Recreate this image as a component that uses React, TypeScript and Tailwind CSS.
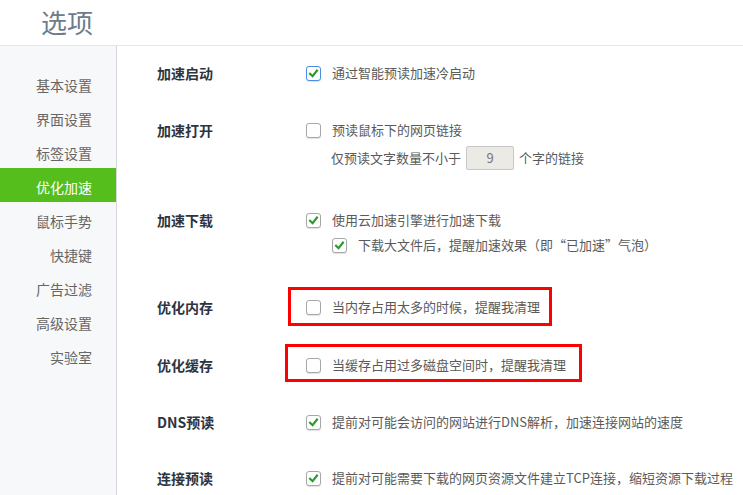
import type { ReactNode } from "react";

const font = { fontFamily: '"Noto Sans CJK SC", "Noto Sans", sans-serif' };

function Check({ checked, focus }: { checked?: boolean; focus?: boolean }) {
  return (
    <span
      className={`flex h-[15px] w-[15px] shrink-0 items-center justify-center rounded-[3px] border bg-white shadow-[0_1px_1px_rgba(0,0,0,0.12)] ${
        focus ? "border-[#4a8ee6]" : "border-[#a8a8a8]"
      }`}
    >
      {checked && (
        <svg viewBox="0 0 12 12" className="h-[11px] w-[11px]">
          <path d="M2.2 6.2 L5 9 L9.8 2.8" stroke="#2a9a2a" strokeWidth="2.3" fill="none" strokeLinecap="square" />
        </svg>
      )}
    </span>
  );
}

function Option({ checked, focus, children }: { checked?: boolean; focus?: boolean; children: ReactNode }) {
  return (
    <div className="flex h-[22px] items-center">
      <Check checked={checked} focus={focus} />
      <span className="ml-[11px] whitespace-nowrap text-[13px] text-[#5a5a5a]">{children}</span>
    </div>
  );
}

function Row({ label, className, children }: { label: string; className?: string; children: ReactNode }) {
  return (
    <div className={`flex ${className ?? ""}`}>
      <div className="w-[149px] shrink-0 text-[14px] font-bold leading-[22px] text-[#2d3440]">{label}</div>
      <div className="flex flex-col">{children}</div>
    </div>
  );
}

const menu = ["基本设置", "界面设置", "标签设置", "优化加速", "鼠标手势", "快捷键", "广告过滤", "高级设置", "实验室"];

export default function App() {
  return (
    <div className="h-[495px] w-[743px] overflow-hidden bg-white" style={font}>
      <div className="flex h-[46px] items-center border-b border-[#e6e6e6] pb-[2px] pl-[41px] text-[26px] text-[#6c7c8c]">
        选项
      </div>
      <div className="flex h-[449px]">
        <div className="w-[117px] shrink-0 border-r border-[#d6d8dc] bg-[#f7f8fa] pt-[20px]">
          {menu.map((m) => (
            <div
              key={m}
              className={`flex h-[34px] items-center justify-end pr-[24px] pt-[4px] text-[14px] ${
                m === "优化加速" ? "bg-[#55bd1c] text-white" : "text-[#666]"
              }`}
            >
              {m}
            </div>
          ))}
        </div>
        <div className="flex-1 pl-[40px] pt-[16px]">
          <Row label="加速启动">
            <Option checked focus>
              通过智能预读加速冷启动
            </Option>
          </Row>
          <Row label="加速打开" className="mt-[35px]">
            <Option>预读鼠标下的网页链接</Option>
            <div className="mt-[3px] flex h-[27px] items-center whitespace-nowrap pl-[25px] text-[13px] text-[#5a5a5a]">
              仅预读文字数量不小于
              <span className="mx-[5px] flex h-[24px] w-[48px] items-center justify-center rounded-[2px] border border-[#c8c8c8] bg-[#ebeae4] text-[13px] text-[#777]">
                9
              </span>
              个字的链接
            </div>
          </Row>
          <Row label="加速下载" className="mt-[38px]">
            <Option checked>使用云加速引擎进行加速下载</Option>
            <div className="mt-[3px] pl-[26px]">
              <Option checked>下载大文件后，提醒加速效果（即“已加速”气泡）</Option>
            </div>
          </Row>
          <Row label="优化内存" className="mt-[40px]">
            <div className="relative">
              <span className="absolute -bottom-[8px] -left-[18px] -right-[12px] -top-[9px] border-[3px] border-[#ff0000]" />
              <Option>当内存占用太多的时候，提醒我清理</Option>
            </div>
          </Row>
          <Row label="优化缓存" className="mt-[36px]">
            <div className="relative">
              <span className="absolute -bottom-[6px] -left-[21px] -right-[16px] -top-[10px] border-[3px] border-[#ff0000]" />
              <Option>当缓存占用过多磁盘空间时，提醒我清理</Option>
            </div>
          </Row>
          <Row label="DNS预读" className="mt-[35px]">
            <Option checked>提前对可能会访问的网站进行DNS解析，加速连接网站的速度</Option>
          </Row>
          <Row label="连接预读" className="mt-[34px]">
            <Option checked>提前对可能需要下载的网页资源文件建立TCP连接，缩短资源下载过程</Option>
          </Row>
        </div>
      </div>
    </div>
  );
}
